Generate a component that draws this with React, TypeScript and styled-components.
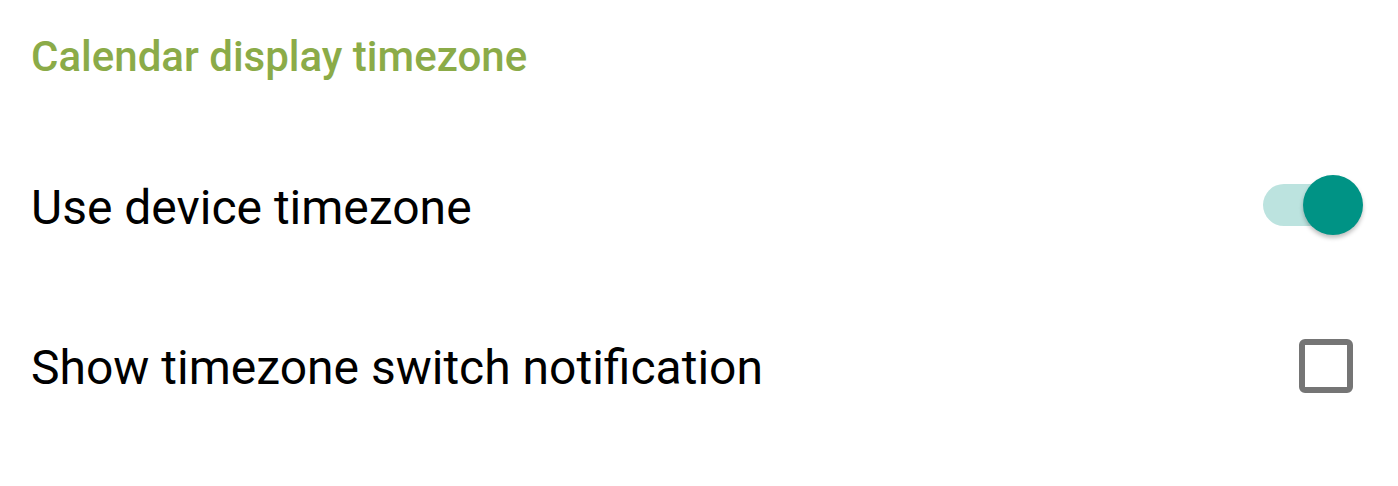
import React from "react";
import styled, { createGlobalStyle } from "styled-components";

const GlobalStyle = createGlobalStyle`
  html, body {
    margin: 0;
    padding: 0;
    background: #fff;
  }
  body {
    font-family: Roboto, "Noto Sans", sans-serif;
  }
`;

const App: React.FC = () => {
  return (
    <>
      <GlobalStyle />
      <Page>
        <Header>Calendar display timezone</Header>
        <Row>
          <Label>Use device timezone</Label>
          <Switch>
            <Track />
            <Thumb />
          </Switch>
        </Row>
        <Row>
          <Label>Show timezone switch notification</Label>
          <Checkbox />
        </Row>
      </Page>
    </>
  );
};

export default App;

const Page = styled.div`
  width: 1398px;
  height: 486px;
  display: flex;
  flex-direction: column;
  box-sizing: border-box;
  padding: 32px 35px 0 31px;
`;

const Header = styled.div`
  font-size: 42px;
  font-weight: 500;
  color: #8bab48;
  line-height: 50px;
  padding-bottom: 45px;
`;

const Row = styled.div`
  display: flex;
  align-items: center;
  justify-content: space-between;
  height: 160px;
`;

const Label = styled.div`
  font-size: 48px;
  color: #000;
`;

const Switch = styled.div`
  position: relative;
  width: 100px;
  height: 60px;
  margin-bottom: 4px;
`;

const Track = styled.div`
  position: absolute;
  left: 0;
  right: 8px;
  top: 9px;
  height: 42px;
  border-radius: 21px;
  background: #bce3df;
`;

const Thumb = styled.div`
  position: absolute;
  right: 0;
  top: 0;
  width: 60px;
  height: 60px;
  border-radius: 50%;
  background: #009385;
  box-shadow: 0 3px 4px rgba(0, 0, 0, 0.25);
`;

const Checkbox = styled.div`
  width: 54px;
  height: 54px;
  margin-right: 10px;
  margin-bottom: 2px;
  box-sizing: border-box;
  border: 6px solid #757575;
  border-radius: 6px;
`;
